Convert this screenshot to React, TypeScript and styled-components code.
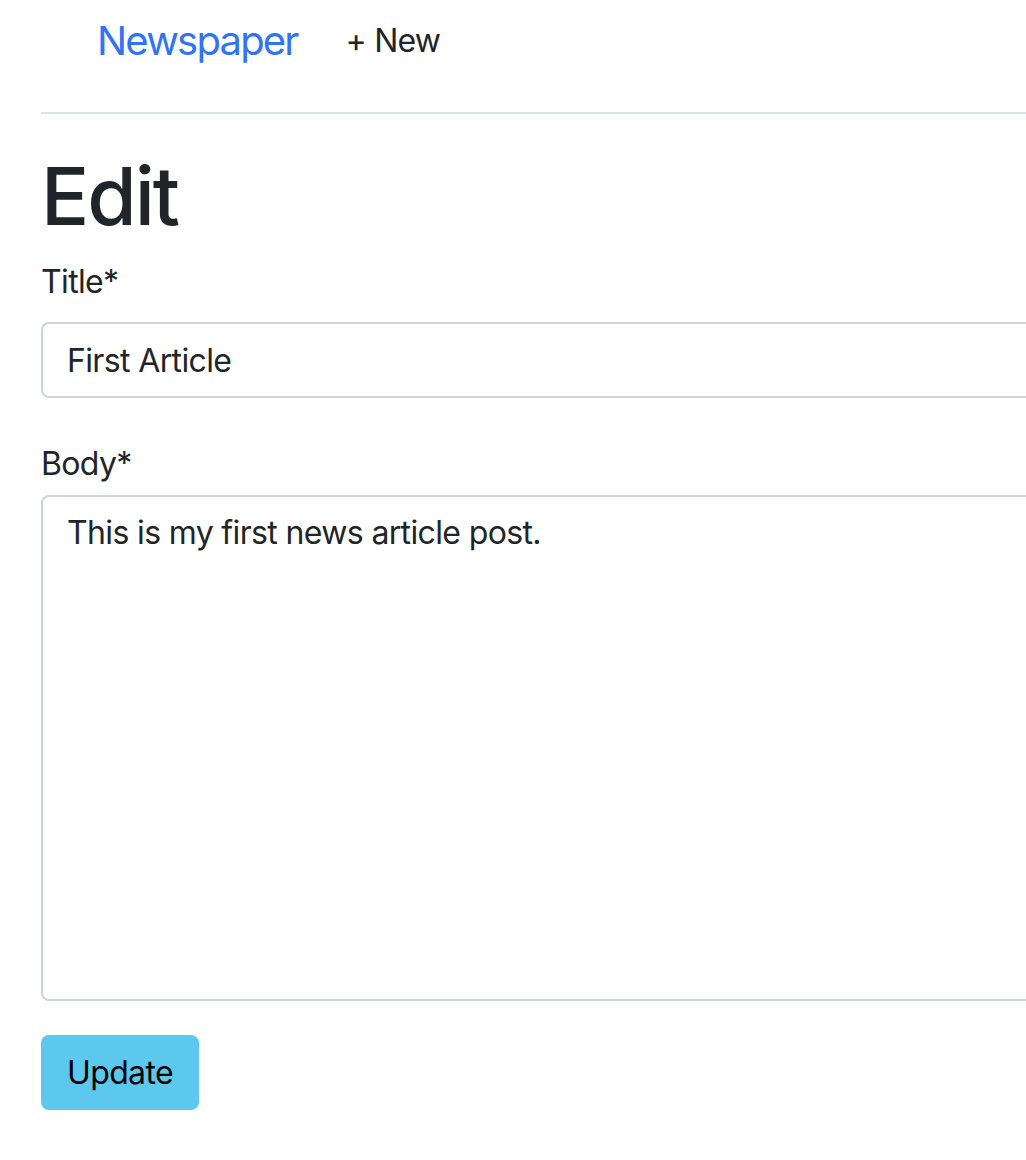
import React from "react";
import styled, { createGlobalStyle } from "styled-components";

const GlobalStyle = createGlobalStyle`
  html, body {
    margin: 0;
    padding: 0;
    background: #ffffff;
    overflow: hidden;
  }
  body {
    font-family: Inter, "Noto Sans", "Liberation Sans", sans-serif;
    color: #212529;
  }
  * { box-sizing: border-box; }
`;

const Page = styled.div`
  width: 100%;
  padding-left: 41px;
  display: flex;
  flex-direction: column;
`;

const Nav = styled.nav`
  height: 81px;
  display: flex;
  align-items: center;
  padding-left: 56px;
`;

const Brand = styled.a`
  font-size: 40px;
  line-height: 60px;
  letter-spacing: -0.045em;
  color: #2f73f6;
  text-decoration: none;
  margin-right: 48px;
`;

const NavLink = styled.a`
  font-size: 32px;
  line-height: 48px;
  letter-spacing: -0.025em;
  color: #212529;
  text-decoration: none;
`;

const Divider = styled.hr`
  margin: 31px 0 0;
  border: 0;
  height: 2px;
  background: #dee2e6;
`;

const Heading = styled.h1`
  margin: 34px 0 14px;
  font-size: 80px;
  line-height: 96px;
  font-weight: 500;
  letter-spacing: -0.025em;
  color: #212529;
`;

const Form = styled.form`
  display: flex;
  flex-direction: column;
`;

const Label = styled.label<{ $gap: number; $top?: number }>`
  display: block;
  font-size: 32px;
  line-height: 48px;
  letter-spacing: -0.02em;
  color: #212529;
  margin-top: ${(p) => p.$top ?? 0}px;
  margin-bottom: ${(p) => p.$gap}px;
`;

const fieldBase = `
  display: block;
  width: 100%;
  font-family: inherit;
  font-size: 32px;
  line-height: 48px;
  letter-spacing: -0.02em;
  color: #212529;
  background: #ffffff;
  border: 2px solid #ced4da;
  border-right: none;
  border-radius: 8px 0 0 8px;
  padding: 12px 24px;
  outline: none;
  margin: 0;
`;

const TextInput = styled.input`
  ${fieldBase}
  height: 76px;
`;

const TextArea = styled.textarea`
  ${fieldBase}
  height: 506px;
  resize: none;
`;

const SubmitButton = styled.button`
  align-self: flex-start;
  margin-top: 34px;
  height: 75px;
  padding: 0 24px;
  font-family: inherit;
  font-size: 32px;
  line-height: 48px;
  letter-spacing: -0.02em;
  color: #000000;
  background: #5dc8ed;
  border: 2px solid #5dc8ed;
  border-radius: 8px;
  cursor: pointer;
`;

export default function App() {
  return (
    <>
      <GlobalStyle />
      <Page>
        <Nav>
          <Brand href="#">Newspaper</Brand>
          <NavLink href="#">+ New</NavLink>
        </Nav>
        <Divider />
        <Heading>Edit</Heading>
        <Form onSubmit={(e) => e.preventDefault()}>
          <Label htmlFor="title" $gap={16}>Title*</Label>
          <TextInput id="title" type="text" defaultValue="First Article" />
          <Label htmlFor="body" $top={42} $gap={7}>Body*</Label>
          <TextArea id="body" defaultValue="This is my first news article post." />
          <SubmitButton type="submit">Update</SubmitButton>
        </Form>
      </Page>
    </>
  );
}
